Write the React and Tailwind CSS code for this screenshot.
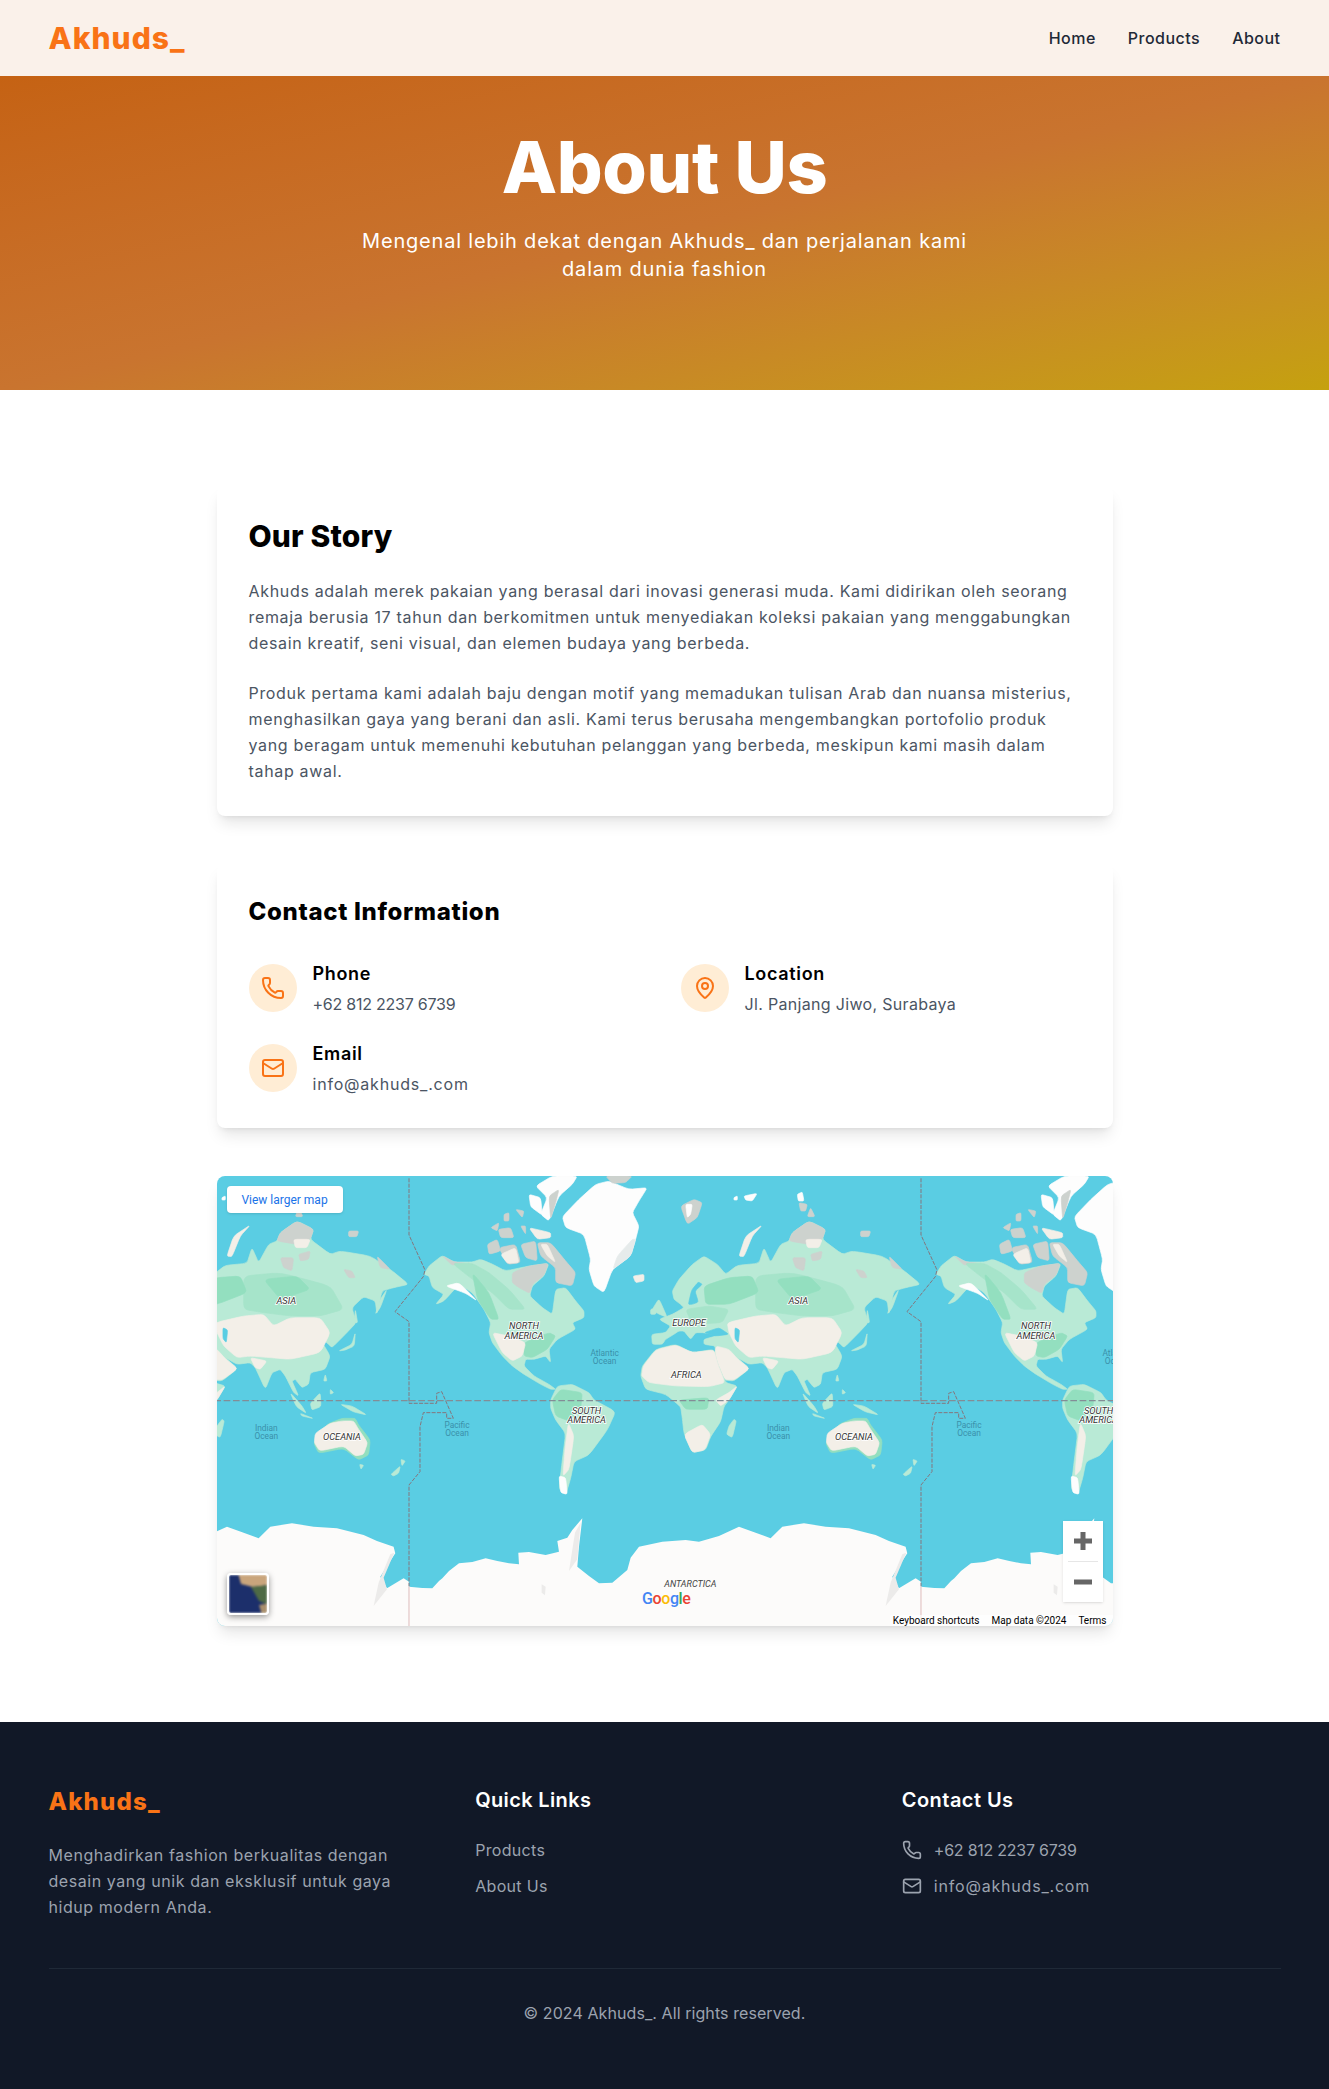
import { Phone, MapPin, Mail } from 'lucide-react'

const GREEN = '#b9ead6'
const MID = '#a6e4ca'
const DARK = '#93dfbf'
const SAND = '#f3efe8'
const GREY = '#cdd2ce'
const ICE = '#fdfdfd'
const WATER = '#5acde3'

// map shapes, in 3x coordinates of one 512px wide world
const LAND = [
  [GREEN, '60,270 100,238 135,258 190,258 215,250 245,262 290,285 360,270 420,262 405,300 370,330 362,360 400,395 430,415 440,340 470,335 500,375 525,405 525,425 490,440 500,460 445,490 420,520 425,560 410,540 375,550 350,550 345,570 375,600 420,625 440,640 425,640 395,625 345,595 310,570 280,540 250,500 240,470 245,440 225,400 190,350 150,325 105,375 80,385 105,355 70,335 60,300 45,295'],
  [GREY, '310,290 360,270 418,262 405,298 370,325 362,352 330,335 310,320'],
  [GREY, '100,240 135,258 170,262 130,268'],
  [MID, '130,262 190,262 240,290 300,340 350,400 300,400 250,350 190,310'],
  [DARK, '190,290 240,350 270,430 245,430 205,370'],
  [DARK, '345,500 420,470 440,480 415,520 370,545 345,540'],
  [SAND, '250,470 300,480 350,500 340,540 310,555 280,530'],
  [ICE, '110,330 150,320 205,375 170,352'],
  [GREY, '235,205 265,190 275,225 240,235'],
  [GREY, '270,215 320,205 335,260 295,265'],
  [SAND, '275,235 320,215 330,260 295,262'],
  [GREY, '335,205 380,195 385,255 350,245'],
  [GREY, '385,200 425,200 470,255 500,290 490,330 440,320 440,275 395,240'],
  [SAND, '395,205 415,205 440,260 415,240'],
  [GREY, '268,160 305,155 315,185 275,185'],
  [GREY, '245,155 270,140 265,165'],
  [SAND, '360,155 425,170 425,185 385,190'],
  [GREY, '320,100 345,105 340,125'],
  [GREY, '335,150 350,150 350,175'],
  [GREY, '285,115 300,110 300,135 285,135'],
  [ICE, '360,55 395,65 400,118 365,92'],
  [ICE, '380,30 430,0 505,0 490,25 450,60 420,135 395,115 415,65'],
  [GREY, '420,60 450,40 440,80 425,130'],
  [ICE, '460,122 510,70 560,25 600,15 660,40 715,35 690,75 670,110 690,150 680,190 665,240 610,280 585,350 555,330 540,280 545,250 525,175 470,155'],
  [GREY, '590,0 670,0 650,20 610,22'],
  ['#e6ebeb', '670,190 680,190 665,240 612,280 625,240'],
  [SAND, '672,300 705,295 705,315 680,320'],
  [GREEN, '790,345 810,310 850,265 885,240 925,265 950,295 985,268 1050,262 1065,215 1085,260 1115,205 1140,195 1150,170 1200,135 1250,160 1240,190 1300,235 1330,225 1420,240 1480,280 1535,325 1490,335 1455,345 1440,415 1435,375 1400,362 1365,395 1378,440 1345,475 1305,515 1290,500 1270,490 1300,540 1285,580 1240,590 1235,625 1215,635 1195,610 1185,615 1205,660 1190,650 1165,600 1150,580 1125,590 1105,640 1075,575 1060,560 1020,565 985,545 1022,578 975,615 945,612 915,555 920,510 885,505 885,490 930,478 885,470 860,470 845,490 825,465 810,465 790,478 770,490 760,505 730,505 728,475 770,470 785,450 750,430 790,415 825,395 815,385 795,370'],
  [MID, '1040,300 1150,290 1300,330 1340,400 1270,420 1180,420 1100,410 1040,400'],
  [MID, '830,400 900,390 960,400 940,440 850,445'],
  [DARK, '885,330 960,305 1030,300 1050,350 960,385 890,385'],
  [DARK, '1100,310 1200,300 1240,340 1150,370'],
  [GREY, '1140,195 1150,170 1200,135 1250,160 1240,190 1200,205'],
  [SAND, '1190,190 1240,190 1230,215 1195,215'],
  [GREY, '1150,245 1190,245 1185,285 1160,275'],
  [GREY, '1205,235 1240,225 1235,250 1210,255'],
  [GREY, '1340,280 1365,285 1375,305 1355,305'],
  [GREY, '1440,240 1480,280 1450,275'],
  [SAND, '955,440 1040,420 1100,415 1130,450 1180,425 1270,425 1300,470 1270,530 1180,550 1120,545 1060,540 1020,545 980,510 960,470'],
  [SAND, '920,510 960,520 985,548 1022,578 975,612 948,610 920,560'],
  [SAND, '1060,545 1110,555 1090,580 1075,575'],
  [WATER, '850,385 868,378 858,345 880,325 868,318 848,342 838,385'],
  [WATER, '885,470 930,455 960,475 920,480'],
  [WATER, '978,455 992,462 988,500 978,488'],
  [GREEN, '730,400 750,368 775,425 745,412'],
  [GREEN, '725,400 745,395 740,415 725,415'],
  [GREEN, '1435,415 1450,370 1470,340 1450,395'],
  [GREEN, '1325,525 1365,505 1375,470 1372,510 1345,522'],
  [GREEN, '1375,400 1382,440 1372,440'],
  [GREY, '1355,165 1385,165 1380,182 1355,182'],
  [SAND, '990,240 1010,180 1060,147 1030,180 1005,242'],
  [GREY, '815,90 855,70 880,80 865,125 835,145'],
  [ICE, '830,85 850,85 845,115 835,125'],
  [ICE, '975,65 985,60 985,72 975,72'],
  [ICE, '1005,60 1045,52 1030,75 1010,72'],
  [ICE, '1165,55 1180,48 1185,75 1168,75'],
  [GREY, '1170,80 1195,85 1190,105 1175,105'],
  [GREY, '1205,95 1218,122 1195,122'],
  [GREEN, '1180,650 1215,690 1228,712 1198,692'],
  [GREEN, '1240,682 1270,650 1272,692 1245,702'],
  [GREEN, '1210,712 1250,728 1215,720'],
  [GREEN, '1330,685 1365,690 1410,717 1370,708'],
  [GREEN, '1285,595 1290,615 1280,615'],
  [GREEN, '1300,640 1310,650 1300,655'],
  [GREEN, '695,600 700,570 740,520 800,505 850,530 915,520 925,560 950,620 985,630 960,672 945,692 935,737 905,782 890,822 850,830 825,772 820,727 815,692 770,655 710,640'],
  [SAND, '698,600 703,570 740,522 800,507 850,530 915,522 925,560 948,620 900,632 800,630 720,620'],
  [DARK, '810,672 900,665 895,700 830,700'],
  [SAND, '825,775 880,745 905,775 888,822 850,830'],
  [SAND, '920,672 960,650 985,630 960,672 935,690'],
  [GREEN, '975,730 982,735 970,785 953,775 960,750'],
  [GREEN, '425,672 445,630 490,625 540,650 555,672 620,707 595,762 540,837 495,857 485,907 470,957 450,937 460,852 470,772 440,732 425,697'],
  [DARK, '430,672 455,640 520,650 515,700 480,735 440,720'],
  [SAND, '478,740 495,780 480,880 462,900 468,820'],
  [ICE, '450,900 470,905 475,955 455,950'],
  [DARK, '1250,800 1290,745 1335,727 1375,727 1385,747 1420,792 1415,837 1385,852 1340,817 1265,832'],
  [SAND, '1255,772 1300,742 1335,735 1370,735 1385,760 1412,800 1400,835 1375,840 1340,810 1268,825 1252,800'],
  [GREEN, '1482,895 1510,870 1505,892 1490,900'],
  [GREEN, '1512,850 1525,855 1515,870'],
  [GREEN, '1388,865 1400,868 1392,880'],
]

const ANTARCTICA = '0,1232 40,1236 70,1237 90,1215 100,1207 120,1185 150,1162 190,1158 230,1147 265,1155 300,1162 330,1165 328,1130 360,1128 410,1137 450,1127 445,1095 475,1085 490,1062 520,1027 510,1112 505,1172 540,1200 570,1222 610,1220 655,1182 665,1145 690,1112 760,1097 830,1092 870,1097 930,1080 990,1052 1040,1070 1085,1087 1120,1052 1185,1042 1250,1052 1320,1057 1400,1077 1440,1095 1490,1112 1495,1132 1450,1202 1470,1237 1520,1207 1536,1217 1536,1360 0,1360'
const ICE_SHADE = [
  '498,1070 515,1040 505,1150 480,1185',
  '1480,1135 1492,1130 1460,1205 1470,1240 1430,1290 1445,1220',
  '398,1225 410,1232 408,1258 398,1250',
]

const LABELS = [
  ['NORTH', 345, 452],
  ['AMERICA', 345, 482],
  ['ASIA', 1168, 378],
  ['EUROPE', 840, 443],
  ['AFRICA', 832, 600],
  ['SOUTH', 533, 708],
  ['AMERICA', 533, 734],
  ['OCEANIA', 1335, 785],
]

const SEAS = [
  ['Atlantic', 587, 533],
  ['Ocean', 587, 558],
  ['Pacific', 144, 750],
  ['Ocean', 144, 774],
  ['Indian', 1108, 759],
  ['Ocean', 1108, 782],
]

// takes the hard edge off a polygon's corners, keeps its outline
function soften(points) {
  const pts = points.split(' ').map((p) => p.split(',').map(Number))
  const lerp = (a, b, t) => [a[0] + (b[0] - a[0]) * t, a[1] + (b[1] - a[1]) * t]
  let d = ''
  pts.forEach((p, i) => {
    const prev = pts[(i + pts.length - 1) % pts.length]
    const next = pts[(i + 1) % pts.length]
    const a = lerp(p, prev, 0.2)
    const b = lerp(p, next, 0.2)
    d += `${i ? 'L' : 'M'}${a[0]},${a[1]} Q${p[0]},${p[1]} ${b[0]},${b[1]} `
  })
  return d + 'Z'
}

function World({ offset, antarctica }) {
  const inView = ([, x]) => offset + x / 3 > -25 && offset + x / 3 < 925
  return (
    <g transform={`translate(${offset} 0) scale(0.3333)`}>
      {LAND.map(([fill, points], i) => (
        <path key={i} d={soften(points)} fill={fill} stroke={fill} strokeWidth="2" strokeLinejoin="round" />
      ))}
      <polygon points={ANTARCTICA} fill="#fcfbfa" />
      {ICE_SHADE.map((points, i) => (
        <polygon key={i} points={points} fill="#ecebea" />
      ))}
      <polyline
        points="0,7 0,177 48,282 43,302 -42,407 0,437 0,682 83,682 83,652 98,647 133,727 113,727 113,710 43,710 33,752 33,887 0,927 0,1230"
        fill="none"
        stroke="#85757c"
        strokeWidth="3"
        strokeDasharray="12 4"
      />
      <line x1="0" y1="1230" x2="0" y2="1360" stroke="#e3bcbc" strokeWidth="3" />
      <line x1="0" y1="674" x2="1536" y2="674" stroke="#838d96" strokeWidth="4" strokeDasharray="20 8" />
      {SEAS.filter(inView).map(([text, x, y], i) => (
        <text key={i} x={x} y={y} textAnchor="middle" dominantBaseline="middle" fontFamily="Roboto, sans-serif" fontSize="25" fill="#3a90aa">
          {text}
        </text>
      ))}
      {LABELS.filter(inView).map(([text, x, y], i) => (
        <text
          key={i}
          x={x}
          y={y}
          textAnchor="middle"
          dominantBaseline="middle"
          fontFamily="Roboto, sans-serif"
          fontStyle="italic"
          fontSize="28"
          fill="#333"
          stroke="#fff"
          strokeWidth="5"
          paintOrder="stroke"
        >
          {text}
        </text>
      ))}
      {antarctica && (
        <text x="844" y="1227" textAnchor="middle" dominantBaseline="middle" fontFamily="Roboto, sans-serif" fontStyle="italic" fontSize="27" fill="#444">
          ANTARCTICA
        </text>
      )}
    </g>
  )
}

function MapCard() {
  return (
    <div className="relative h-[450px] overflow-hidden rounded-lg bg-[#5acde3] tracking-normal shadow-lg">
      <svg className="block h-full w-full" viewBox="0 0 896 450">
        <World offset={-320} />
        <World offset={192} antarctica />
        <World offset={704} />
        <text x="425" y="428" fontFamily="Roboto, sans-serif" fontSize="16" fontWeight="500" letterSpacing="-0.4">
          <tspan fill="#4285f4">G</tspan>
          <tspan fill="#ea4335">o</tspan>
          <tspan fill="#fbbc05">o</tspan>
          <tspan fill="#4285f4">g</tspan>
          <tspan fill="#34a853">l</tspan>
          <tspan fill="#ea4335">e</tspan>
        </text>
      </svg>

      <a className="absolute left-[10px] top-[10px] flex h-[27px] w-[116px] items-center justify-center rounded-sm bg-white font-['Roboto',sans-serif] text-[12px] text-[#1a73e8] shadow-sm">
        View larger map
      </a>

      <div className="absolute bottom-[11px] left-[10px] h-[42px] w-[42px] overflow-hidden rounded-sm border-2 border-white shadow-[0_2px_6px_rgba(0,0,0,0.4)]">
        <svg className="block h-full w-full blur-[1px]" viewBox="0 0 38 38">
          <rect width="38" height="38" fill="#1c2f6b" />
          <polygon points="9,-2 40,-2 40,10 24,12 12,9" fill="#c9a57c" />
          <polygon points="22,12 40,10 40,30 30,26" fill="#4e6a45" />
          <polygon points="30,30 40,28 40,40 33,40" fill="#a98f6c" />
        </svg>
      </div>

      <div className="absolute bottom-[24px] right-[10px] flex h-[81px] w-[40px] flex-col items-center bg-white shadow-sm">
        <svg className="mt-[10px]" width="20" height="20" viewBox="0 0 20 20">
          <rect x="1" y="7.5" width="18" height="5" fill="#666" />
          <rect x="7.5" y="1" width="5" height="18" fill="#666" />
        </svg>
        <div className="mt-[10px] h-px w-[30px] bg-[#e6e6e6]" />
        <svg className="mt-[10px]" width="20" height="20" viewBox="0 0 20 20">
          <rect x="1" y="7.5" width="18" height="5" fill="#666" />
        </svg>
      </div>

      <div className="absolute bottom-0 right-0 flex h-[11px] items-center gap-3 bg-white/70 pl-[3px] pr-[6px] font-['Roboto',sans-serif] text-[10px] leading-none text-black">
        <span>Keyboard shortcuts</span>
        <span>Map data ©2024</span>
        <span>Terms</span>
      </div>
    </div>
  )
}

function ContactItem({ icon: Icon, title, value, valueClass }) {
  return (
    <div className="flex items-center gap-4">
      <div className="flex h-12 w-12 shrink-0 items-center justify-center rounded-full bg-[#ffedd5] text-[#f97316]">
        <Icon className="h-6 w-6" />
      </div>
      <div>
        <h3 className="text-lg font-semibold text-black">{title}</h3>
        <p className={`mt-1 leading-6 text-[#4b5563] ${valueClass}`}>{value}</p>
      </div>
    </div>
  )
}

export default function App() {
  return (
    <div className="bg-white font-['Inter',sans-serif] tracking-[0.042em]">
      <nav className="bg-[#faf1ea]">
        <div className="mx-auto flex h-[76px] max-w-7xl items-center justify-between px-6">
          <a className="text-3xl font-extrabold tracking-[0.035em] text-[#f97316]">Akhuds_</a>
          <div className="flex items-center gap-8 font-medium tracking-[0.03em] text-[#1f2937]">
            <a>Home</a>
            <a>Products</a>
            <a>About</a>
          </div>
        </div>
      </nav>

      <header className="h-[314px] bg-linear-to-br from-[#c56213] via-[#c9742f] to-[#c5a10e] pt-[55px] text-center text-white">
        <h1 className="mb-6 text-7xl font-extrabold tracking-[-0.005em]">About Us</h1>
        <p className="mx-auto max-w-2xl text-xl tracking-[0.04em]">
          Mengenal lebih dekat dengan Akhuds_ dan perjalanan kami
          <br />
          dalam dunia fashion
        </p>
      </header>

      <main className="mx-auto max-w-4xl py-24">
        <section className="mb-12 rounded-lg bg-white p-8 shadow-lg">
          <h2 className="mb-6 text-3xl font-extrabold tracking-[0.005em] text-black">Our Story</h2>
          <p className="mb-6 leading-relaxed text-[#4b5563]">
            Akhuds adalah merek pakaian yang berasal dari inovasi generasi muda. Kami didirikan oleh seorang remaja berusia 17 tahun dan berkomitmen untuk menyediakan koleksi pakaian yang menggabungkan desain kreatif, seni visual, dan elemen budaya yang berbeda.
          </p>
          <p className="leading-relaxed text-[#4b5563]">
            Produk pertama kami adalah baju dengan motif yang memadukan tulisan Arab dan nuansa misterius, menghasilkan gaya yang berani dan asli. Kami terus berusaha mengembangkan portofolio produk yang beragam untuk memenuhi kebutuhan pelanggan yang berbeda, meskipun kami masih dalam tahap awal.
          </p>
        </section>

        <section className="mb-12 rounded-lg bg-white p-8 shadow-lg">
          <h2 className="mb-8 text-2xl font-extrabold tracking-[0.028em] text-black">Contact Information</h2>
          <div className="grid grid-cols-2 gap-x-8 gap-y-6">
            <ContactItem icon={Phone} title="Phone" value="+62 812 2237 6739" valueClass="tracking-[-0.015em]" />
            <ContactItem icon={MapPin} title="Location" value="Jl. Panjang Jiwo, Surabaya" valueClass="tracking-[0.02em]" />
            <ContactItem icon={Mail} title="Email" value="info@akhuds_.com" valueClass="tracking-[0.05em]" />
          </div>
        </section>

        <MapCard />
      </main>

      <footer className="bg-[#111827] pb-16 pt-16 text-[#9ca3af]">
        <div className="mx-auto max-w-7xl px-6">
          <div className="grid grid-cols-3 gap-12">
            <div>
              <h3 className="mb-6 text-2xl font-extrabold tracking-[0.05em] text-[#f97316]">Akhuds_</h3>
              <p className="leading-relaxed tracking-[0.035em]">
                Menghadirkan fashion berkualitas dengan desain yang unik dan eksklusif untuk gaya hidup modern Anda.
              </p>
            </div>
            <div>
              <h4 className="mb-6 text-xl font-semibold tracking-[0.018em] text-white">Quick Links</h4>
              <ul className="space-y-3 tracking-[0.02em]">
                <li>Products</li>
                <li>About Us</li>
              </ul>
            </div>
            <div>
              <h4 className="mb-6 text-xl font-semibold tracking-[0.022em] text-white">Contact Us</h4>
              <ul className="space-y-3">
                <li className="flex items-center gap-3 tracking-[-0.015em]">
                  <Phone className="h-5 w-5" />
                  +62 812 2237 6739
                </li>
                <li className="flex items-center gap-3 tracking-[0.05em]">
                  <Mail className="h-5 w-5" />
                  info@akhuds_.com
                </li>
              </ul>
            </div>
          </div>
          <div className="mt-12 border-t border-[#1f2937] pt-8 text-center tracking-[0.005em]">© 2024 Akhuds_. All rights reserved.</div>
        </div>
      </footer>
    </div>
  )
}
